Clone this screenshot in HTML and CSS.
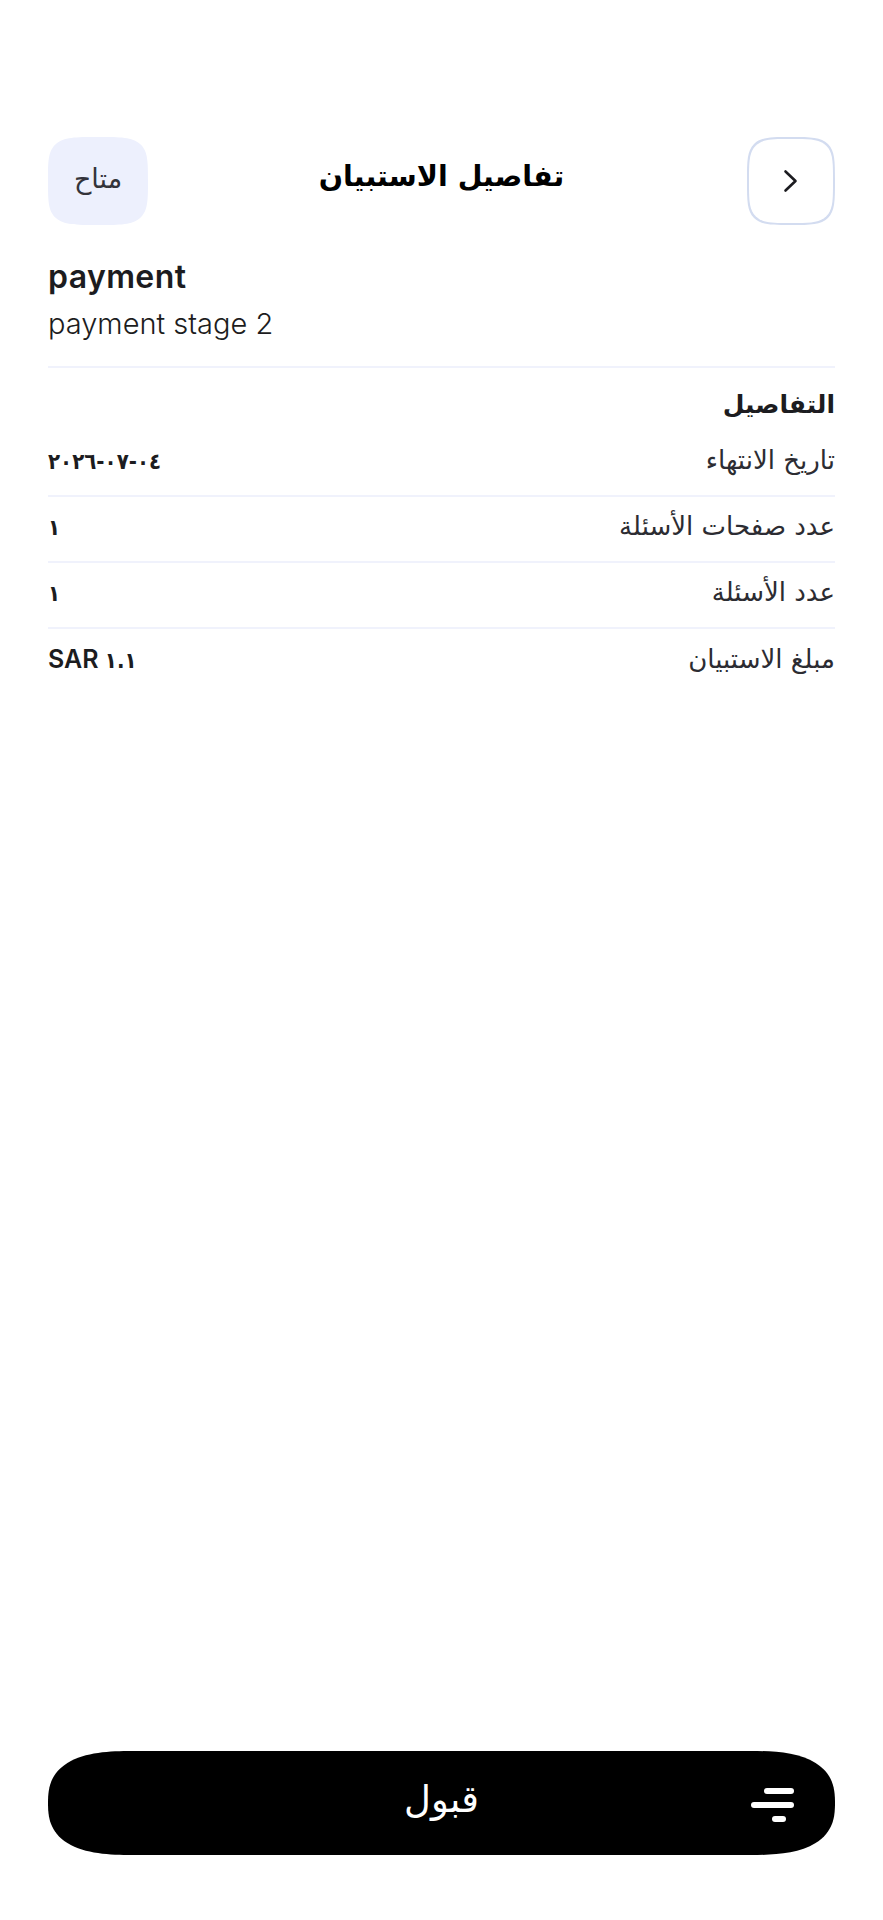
FILE: index.html
```html
<!DOCTYPE html>
<html lang="ar" dir="rtl">
<head>
<meta charset="UTF-8">
<meta name="viewport" content="width=device-width, initial-scale=1.0">
<title>تفاصيل الاستبيان</title>
<link rel="stylesheet" href="styles.css">
</head>
<body>
<div class="page">
  <header class="topbar">
    <button class="back-btn" aria-label="رجوع">
      <svg width="18" height="24" viewBox="0 0 18 24" fill="none" stroke="#1c1c20" stroke-width="2.6" stroke-linecap="round" stroke-linejoin="round"><path d="M3.5 2.5 L13.5 12 L3.5 21.5"/></svg>
    </button>
    <h1 class="topbar-title">تفاصيل الاستبيان</h1>
    <span class="status-pill">متاح</span>
  </header>

  <section class="survey-head" dir="ltr">
    <h2 class="survey-name">payment</h2>
    <p class="survey-sub">payment stage 2</p>
  </section>

  <section class="details">
    <h3 class="details-title">التفاصيل</h3>
    <div class="row">
      <span class="row-label">تاريخ الانتهاء</span>
      <span class="row-value" dir="ltr"><span class="row-num">٢٠٢٦-٠٧-٠٤</span></span>
    </div>
    <div class="row">
      <span class="row-label">عدد صفحات الأسئلة</span>
      <span class="row-value" dir="ltr"><span class="row-num">١</span></span>
    </div>
    <div class="row">
      <span class="row-label">عدد الأسئلة</span>
      <span class="row-value" dir="ltr"><span class="row-num">١</span></span>
    </div>
    <div class="row">
      <span class="row-label">مبلغ الاستبيان</span>
      <span class="row-value" dir="ltr">SAR <span class="row-num">١.١</span></span>
    </div>
  </section>

  <button class="accept-btn">
    <svg class="accept-icon" width="44" height="34" viewBox="0 0 44 34" fill="#fff"><rect x="13" y="0" width="30" height="6" rx="3"/><rect x="0" y="14" width="43" height="6" rx="3"/><rect x="21" y="28" width="14" height="6" rx="3"/></svg>
    <span>قبول</span>
  </button>
</div>
</body>
</html>
```

FILE: styles.css
```css
* {
  box-sizing: border-box;
}

body {
  margin: 0;
  background: #fff;
  color: #1c1c20;
  font-family: "DejaVu Sans", sans-serif;
}

.page {
  min-height: 1920px;
  display: flex;
  flex-direction: column;
  padding: 137px 48px 65px;
}

.topbar {
  display: grid;
  grid-template-columns: 1fr auto 1fr;
  align-items: center;
}

.back-btn {
  width: 88px;
  height: 88px;
  display: flex;
  align-items: center;
  justify-content: center;
  padding: 0;
  background: #fff;
  border: 2px solid #d3dcf0;
  border-radius: 44px;
  corner-shape: squircle;
  justify-self: start;
}

.topbar-title {
  margin: 0 0 10px;
  font-size: 28.5px;
  font-weight: 700;
  color: #000;
}

.status-pill {
  width: 100px;
  height: 88px;
  display: flex;
  align-items: center;
  justify-content: center;
  padding-bottom: 6px;
  background: #edf0fd;
  border-radius: 50px / 44px;
  corner-shape: squircle;
  justify-self: end;
  font-size: 27px;
  color: #33333a;
}

.survey-head {
  margin-top: 33px;
  padding-bottom: 24px;
  border-bottom: 2px solid #f0f2fc;
  font-family: Inter, sans-serif;
}

.survey-name {
  margin: 0;
  font-size: 32px;
  line-height: 38px;
  font-weight: 600;
  letter-spacing: 0.4px;
}

.survey-sub {
  margin: 10px 0 0;
  font-size: 29px;
  line-height: 36px;
  font-weight: 300;
}

.details-title {
  margin: 19px 0 8px;
  font-size: 25px;
  line-height: 36px;
  font-weight: 700;
}

.row {
  height: 66px;
  display: flex;
  align-items: center;
  justify-content: space-between;
  padding-bottom: 6px;
  border-bottom: 2px solid #f0f2fc;
}

.row:last-child {
  border-bottom: 0;
}

.row-label {
  font-size: 26px;
  color: #2c2c32;
}

.row-value {
  font-family: Inter, sans-serif;
  font-size: 25px;
  font-weight: 600;
}

.row-num {
  unicode-bidi: bidi-override;
  font-family: "DejaVu Sans Condensed", "DejaVu Sans", sans-serif;
  font-size: 22px;
  font-weight: 700;
  letter-spacing: -3.7px;
}

.accept-btn {
  position: relative;
  margin-top: auto;
  height: 104px;
  display: flex;
  align-items: center;
  justify-content: center;
  padding: 0 0 8px;
  background: #000;
  color: #fff;
  border: 0;
  border-radius: 84px / 52px;
  corner-shape: superellipse(1.4);
  font-family: inherit;
  font-size: 37px;
}

.accept-icon {
  position: absolute;
  right: 40px;
  top: 37px;
}
```
